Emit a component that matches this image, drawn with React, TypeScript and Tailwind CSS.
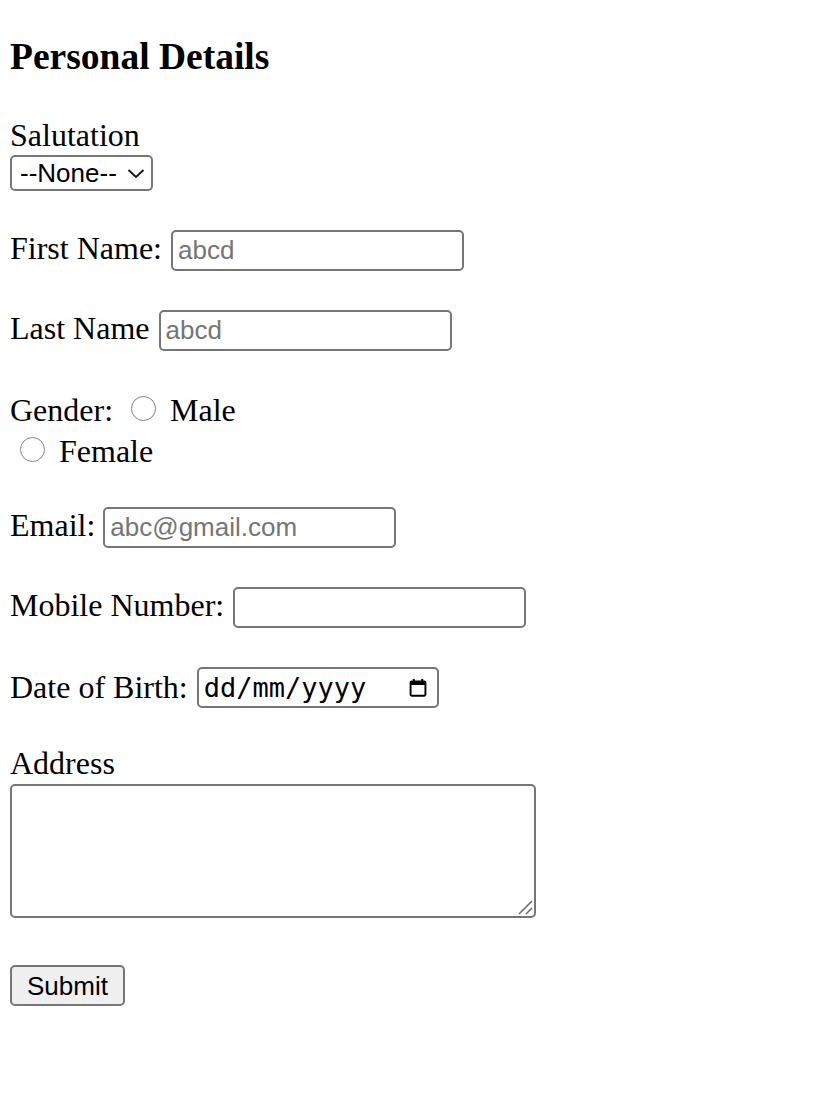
import React from "react";

const serif = "font-['Liberation_Serif','Times_New_Roman',serif]";
const sans = "font-['Liberation_Sans',Arial,sans-serif]";

function TextField({ placeholder }: { placeholder?: string }) {
  return (
    <input
      type="text"
      placeholder={placeholder}
      className={`${sans} h-[41px] w-[293px] rounded-[5px] border-2 border-[#767676] bg-white px-[5px] text-[26px] text-black outline-none placeholder:text-[#757575]`}
    />
  );
}

function Radio() {
  return <span className="inline-block h-[25px] w-[25px] shrink-0 rounded-full border-[1.5px] border-[#858585] bg-white" />;
}

function CalendarIcon() {
  return (
    <svg width="22" height="22" viewBox="0 0 16 16" fill="none">
      <rect x="2.6" y="3.2" width="10.8" height="10.4" rx="0.8" stroke="#000" strokeWidth="1.4" />
      <rect x="2.6" y="3.2" width="10.8" height="2.6" fill="#000" />
      <rect x="4.2" y="1.4" width="1.4" height="2.4" fill="#000" />
      <rect x="10.4" y="1.4" width="1.4" height="2.4" fill="#000" />
    </svg>
  );
}

export default function App() {
  return (
    <div className={`${serif} min-h-[1100px] bg-white pl-[10px] pt-[35px] text-[32px] text-black`}>
      <h3 className="text-[37.5px] font-bold leading-[43px]">Personal Details</h3>

      {/* Salutation */}
      <div className="mt-[39px] leading-[37px]">Salutation</div>
      <div
        className={`${sans} mt-[1px] flex h-[36px] w-[143px] items-center justify-between rounded-[5px] border-2 border-[#767676] bg-white pl-[8px] pr-[6px] text-[26px]`}
      >
        <span>--None--</span>
        <svg width="18" height="11" viewBox="0 0 18 11" fill="none">
          <path d="M1.5 2l7.5 7 7.5-7" stroke="#111" strokeWidth="1.8" />
        </svg>
      </div>

      {/* First / Last name */}
      <div className="mt-[39px] flex items-baseline gap-[9px]">
        <span className="leading-[37px]">First Name:</span>
        <TextField placeholder="abcd" />
      </div>
      <div className="mt-[39px] flex items-baseline gap-[9px]">
        <span className="leading-[37px]">Last Name</span>
        <TextField placeholder="abcd" />
      </div>

      {/* Gender */}
      <div className="mt-[40px] flex h-[37px] items-center">
        <span>Gender:</span>
        <span className="ml-[18px] mr-[14px]">
          <Radio />
        </span>
        <span>Male</span>
      </div>
      <div className="mt-[4px] flex h-[37px] items-center">
        <span className="ml-[10px] mr-[14px]">
          <Radio />
        </span>
        <span>Female</span>
      </div>

      {/* Email / Mobile */}
      <div className="mt-[38px] flex items-baseline gap-[8px]">
        <span className="leading-[37px]">Email:</span>
        <TextField placeholder="abc@gmail.com" />
      </div>
      <div className="mt-[39px] flex items-baseline gap-[9px]">
        <span className="leading-[37px]">Mobile Number:</span>
        <TextField />
      </div>

      {/* Date of birth */}
      <div className="mt-[39px] flex items-center gap-[9px]">
        <span className="leading-[37px]">Date of Birth:</span>
        <div className="flex h-[41px] w-[242px] items-center justify-between rounded-[5px] border-2 border-[#767676] bg-white pl-[5px] pr-[8px]">
          <span className="font-['DejaVu_Sans_Mono',Menlo,monospace] text-[27px] leading-none">dd/mm/yyyy</span>
          <CalendarIcon />
        </div>
      </div>

      {/* Address */}
      <div className="mt-[37px] leading-[37px]">Address</div>
      <div className="relative mt-[2px] w-[526px]">
        <textarea className="block h-[134px] w-full resize-none rounded-[5px] border-2 border-[#767676] bg-white outline-none" />
        <svg className="absolute bottom-[3px] right-[3px]" width="16" height="16" viewBox="0 0 16 16" fill="none">
          <path d="M2 15L15 2" stroke="#6b6b6b" strokeWidth="1.6" />
          <path d="M9 15L15 9" stroke="#6b6b6b" strokeWidth="1.6" />
        </svg>
      </div>

      <button
        className={`${sans} mt-[47px] h-[41px] w-[115px] rounded-[5px] border-2 border-[#767676] bg-[#efefef] text-[26px] text-black`}
      >
        Submit
      </button>
    </div>
  );
}
